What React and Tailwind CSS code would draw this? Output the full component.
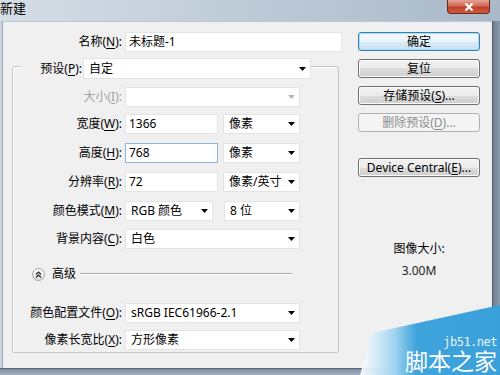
import React from "react";

const Arrow = ({ disabled }) => (
  <svg width="7" height="4" viewBox="0 0 7 4" className="shrink-0">
    <polygon points="0,0 7,0 3.5,4" fill={disabled ? "#b8b8b8" : "#000"} />
  </svg>
);

const Select = ({ cls, text, disabled }) => (
  <div
    className={`h-[20px] bg-white border border-[#e4e4e4] flex items-center justify-between pl-[5px] pr-[4px] ${cls} ${
      disabled ? "bg-[#f4f4f4] border-[#dadada]" : ""
    }`}
  >
    <span className="leading-[18px] whitespace-nowrap">{text}</span>
    <Arrow disabled={disabled} />
  </div>
);

const Input = ({ cls, text, focused }) => (
  <div
    className={`h-[20px] bg-white border flex items-center pl-[3px] ${
      focused ? "border-[#8cb4dc]" : "border-[#e4e4e4]"
    } ${cls}`}
  >
    <span className="leading-[18px]">{text}</span>
  </div>
);

const Row = ({ label, children, disabled, cls = "" }) => (
  <div className={`flex items-center h-[20px] ${cls}`}>
    <div
      className={`w-[109px] text-right leading-[20px] whitespace-nowrap ${
        disabled ? "text-[#a3a3a3]" : ""
      }`}
    >
      {label}
    </div>
    <div className="ml-[3px] flex items-center">{children}</div>
  </div>
);

const Btn = ({ children, cls = "", primary, disabled }) => (
  <div
    className={`h-[19px] w-[122px] rounded-[3px] border flex items-center justify-center leading-[17px] whitespace-nowrap ${
      primary
        ? "border-[#3c7fb1] bg-[linear-gradient(#f3f9fd_0%,#e9f4fb_50%,#d8eaf6_50%,#cbe2f2_100%)] shadow-[inset_0_0_0_1px_#a9dcf6]"
        : disabled
        ? "border-[#adb2b5] bg-[#f4f4f4] text-[#8d8d8d]"
        : "border-[#707070] bg-[linear-gradient(#f2f2f2_0%,#ebebeb_50%,#dddddd_50%,#cfcfcf_100%)] shadow-[inset_0_0_0_1px_#fbfbfb]"
    } ${cls}`}
  >
    {children}
  </div>
);

const U = ({ children }) => (
  <span className="underline underline-offset-[2px] decoration-[1px]">{children}</span>
);

export default function App() {
  return (
    <div className="w-[500px] h-[375px] relative overflow-hidden flex flex-col bg-[#f0f0f0] font-['Noto_Sans','Noto_Sans_CJK_SC',sans-serif] text-[12px] text-black">
      {/* title bar */}
      <div className="h-[21px] shrink-0 flex items-start justify-between bg-[linear-gradient(to_right,#d6dee6,#c0ccd8_45%,#a9b9c9)]">
        <span className="ml-0 text-[13px] leading-[17px]">新建</span>
        <div className="mr-[10px] w-[43px] h-[14px] rounded-b-[4px] border border-t-0 border-[#6b2a20] bg-[linear-gradient(#e4a395_0%,#d26b58_45%,#c2412b_55%,#cf5a3f_100%)] flex items-center justify-center">
          <svg width="10" height="8" viewBox="0 0 10 8">
            <path d="M1.5 0.5 L8.5 7.5 M8.5 0.5 L1.5 7.5" stroke="#fff" strokeWidth="2.2" />
          </svg>
        </div>
      </div>

      {/* middle */}
      <div className="flex flex-1 min-h-0">
        <div className="w-[3px] bg-[#ccd5de] border-r border-[#9aa6b2]" />
        <div className="flex-1 flex border-t border-[#bcc7d2] bg-[#f0f0f0]">
          {/* left column */}
          <div className="w-[339px] pt-[10px]">
            <div className="flex items-center h-[20px]">
              <div className="w-[119px] text-right leading-[20px]">
                名称(<U>N</U>):
              </div>
              <Input cls="ml-[3px] w-[217px]" text="未标题-1" />
            </div>

            <div className="mt-[14px] ml-[9px] w-[327px] border border-[#c3c7ca] rounded-[2px] shadow-[inset_1px_1px_0_#ffffff] pb-[2px]">
              {/* preset row */}
              <div className="flex items-center h-[21px] mt-[-9px]">
                <div className="ml-[8px] w-[62px] bg-[#f0f0f0] text-right leading-[21px] pr-[1px] whitespace-nowrap">
                  预设(<U>P</U>):
                </div>
                <Select cls="w-[228px] h-[21px]" text="自定" />
              </div>

              <Row cls="mt-[8px]" disabled label={<>大小(<U>I</U>):</>}>
                <Select cls="w-[175px]" text="" disabled />
              </Row>
              <Row cls="mt-[7px]" label={<>宽度(<U>W</U>):</>}>
                <Input cls="w-[93px]" text="1366" />
                <Select cls="ml-[5px] w-[77px]" text="像素" />
              </Row>
              <Row cls="mt-[9px]" label={<>高度(<U>H</U>):</>}>
                <Input cls="w-[93px]" text="768" focused />
                <Select cls="ml-[5px] w-[77px]" text="像素" />
              </Row>
              <Row cls="mt-[9px]" label={<>分辨率(<U>R</U>):</>}>
                <Input cls="w-[93px]" text="72" />
                <Select cls="ml-[5px] w-[77px]" text="像素/英寸" />
              </Row>
              <Row cls="mt-[9px]" label={<>颜色模式(<U>M</U>):</>}>
                <Select cls="w-[88px]" text="RGB 颜色" />
                <Select cls="ml-[11px] w-[76px]" text="8 位" />
              </Row>
              <Row cls="mt-[8px]" label={<>背景内容(<U>C</U>):</>}>
                <Select cls="w-[175px]" text="白色" />
              </Row>

              {/* advanced */}
              <div className="flex items-center h-[20px] mt-[15px]">
                <div className="ml-[19px] w-[13px] h-[13px] rounded-full border border-[#a5a5a5] bg-[linear-gradient(#ffffff,#e2e2e2)] flex items-center justify-center">
                  <svg width="7" height="7" viewBox="0 0 7 7">
                    <path d="M1 3.5 L3.5 1 L6 3.5 M1 6.5 L3.5 4 L6 6.5" stroke="#222" strokeWidth="1.2" fill="none" />
                  </svg>
                </div>
                <span className="ml-[7px] leading-[20px]">高级</span>
                <div className="ml-[4px] w-[212px] h-[2px] border-t border-[#a8a8a8] bg-white" />
              </div>

              <Row cls="mt-[19px]" label={<>颜色配置文件(<U>O</U>):</>}>
                <Select cls="w-[175px]" text="sRGB IEC61966-2.1" />
              </Row>
              <Row cls="mt-[7px]" label={<>像素长宽比(<U>X</U>):</>}>
                <Select cls="w-[175px]" text="方形像素" />
              </Row>
            </div>
          </div>

          {/* right column */}
          <div className="ml-[16px] w-[122px] pt-[10px] flex flex-col">
            <Btn primary>确定</Btn>
            <Btn cls="mt-[8px]">复位</Btn>
            <Btn cls="mt-[8px]">
              存储预设(<U>S</U>)...
            </Btn>
            <Btn cls="mt-[8px]" disabled>
              删除预设(<U>D</U>)...
            </Btn>
            <Btn cls="mt-[26px]">
              Device Central(<U>E</U>)...
            </Btn>
            <div className="mt-[64px] text-center leading-[16px]">图像大小:</div>
            <div className="mt-[6px] text-center leading-[16px] text-[#222]">3.00M</div>
          </div>
        </div>
        <div className="w-[8px] bg-[linear-gradient(to_right,#6f7f90,#8b9bac)] border-l border-[#55616e]" />
      </div>

      {/* bottom frame */}
      <div className="h-[7px] shrink-0 bg-[linear-gradient(#7d8ea1,#a3b2c2)] border-t border-[#55677b]" />

      {/* watermark overlay */}
      <svg className="absolute right-0 bottom-0" width="140" height="70" viewBox="0 0 140 70">
        <defs>
          <linearGradient id="wm" x1="0" y1="0" x2="1" y2="0">
            <stop offset="0" stopColor="#ffffff" stopOpacity="0.9" />
            <stop offset="0.25" stopColor="#9fd3f0" />
            <stop offset="0.4" stopColor="#3fa4dc" />
            <stop offset="1" stopColor="#39a0da" />
          </linearGradient>
        </defs>
        <polygon points="0,70 12,28 140,0 140,70" fill="url(#wm)" />
      </svg>
      <div className="absolute right-[3px] bottom-[27px] text-[12px] leading-[12px] text-[#e6f4fc] font-['DejaVu_Sans_Mono',monospace] tracking-[-0.5px]">
        jb51.net
      </div>
      <div className="absolute right-[3px] bottom-[3px] text-[23px] leading-[23px] text-white font-['Noto_Sans_CJK_SC',sans-serif]">
        脚本之家
      </div>
    </div>
  );
}
